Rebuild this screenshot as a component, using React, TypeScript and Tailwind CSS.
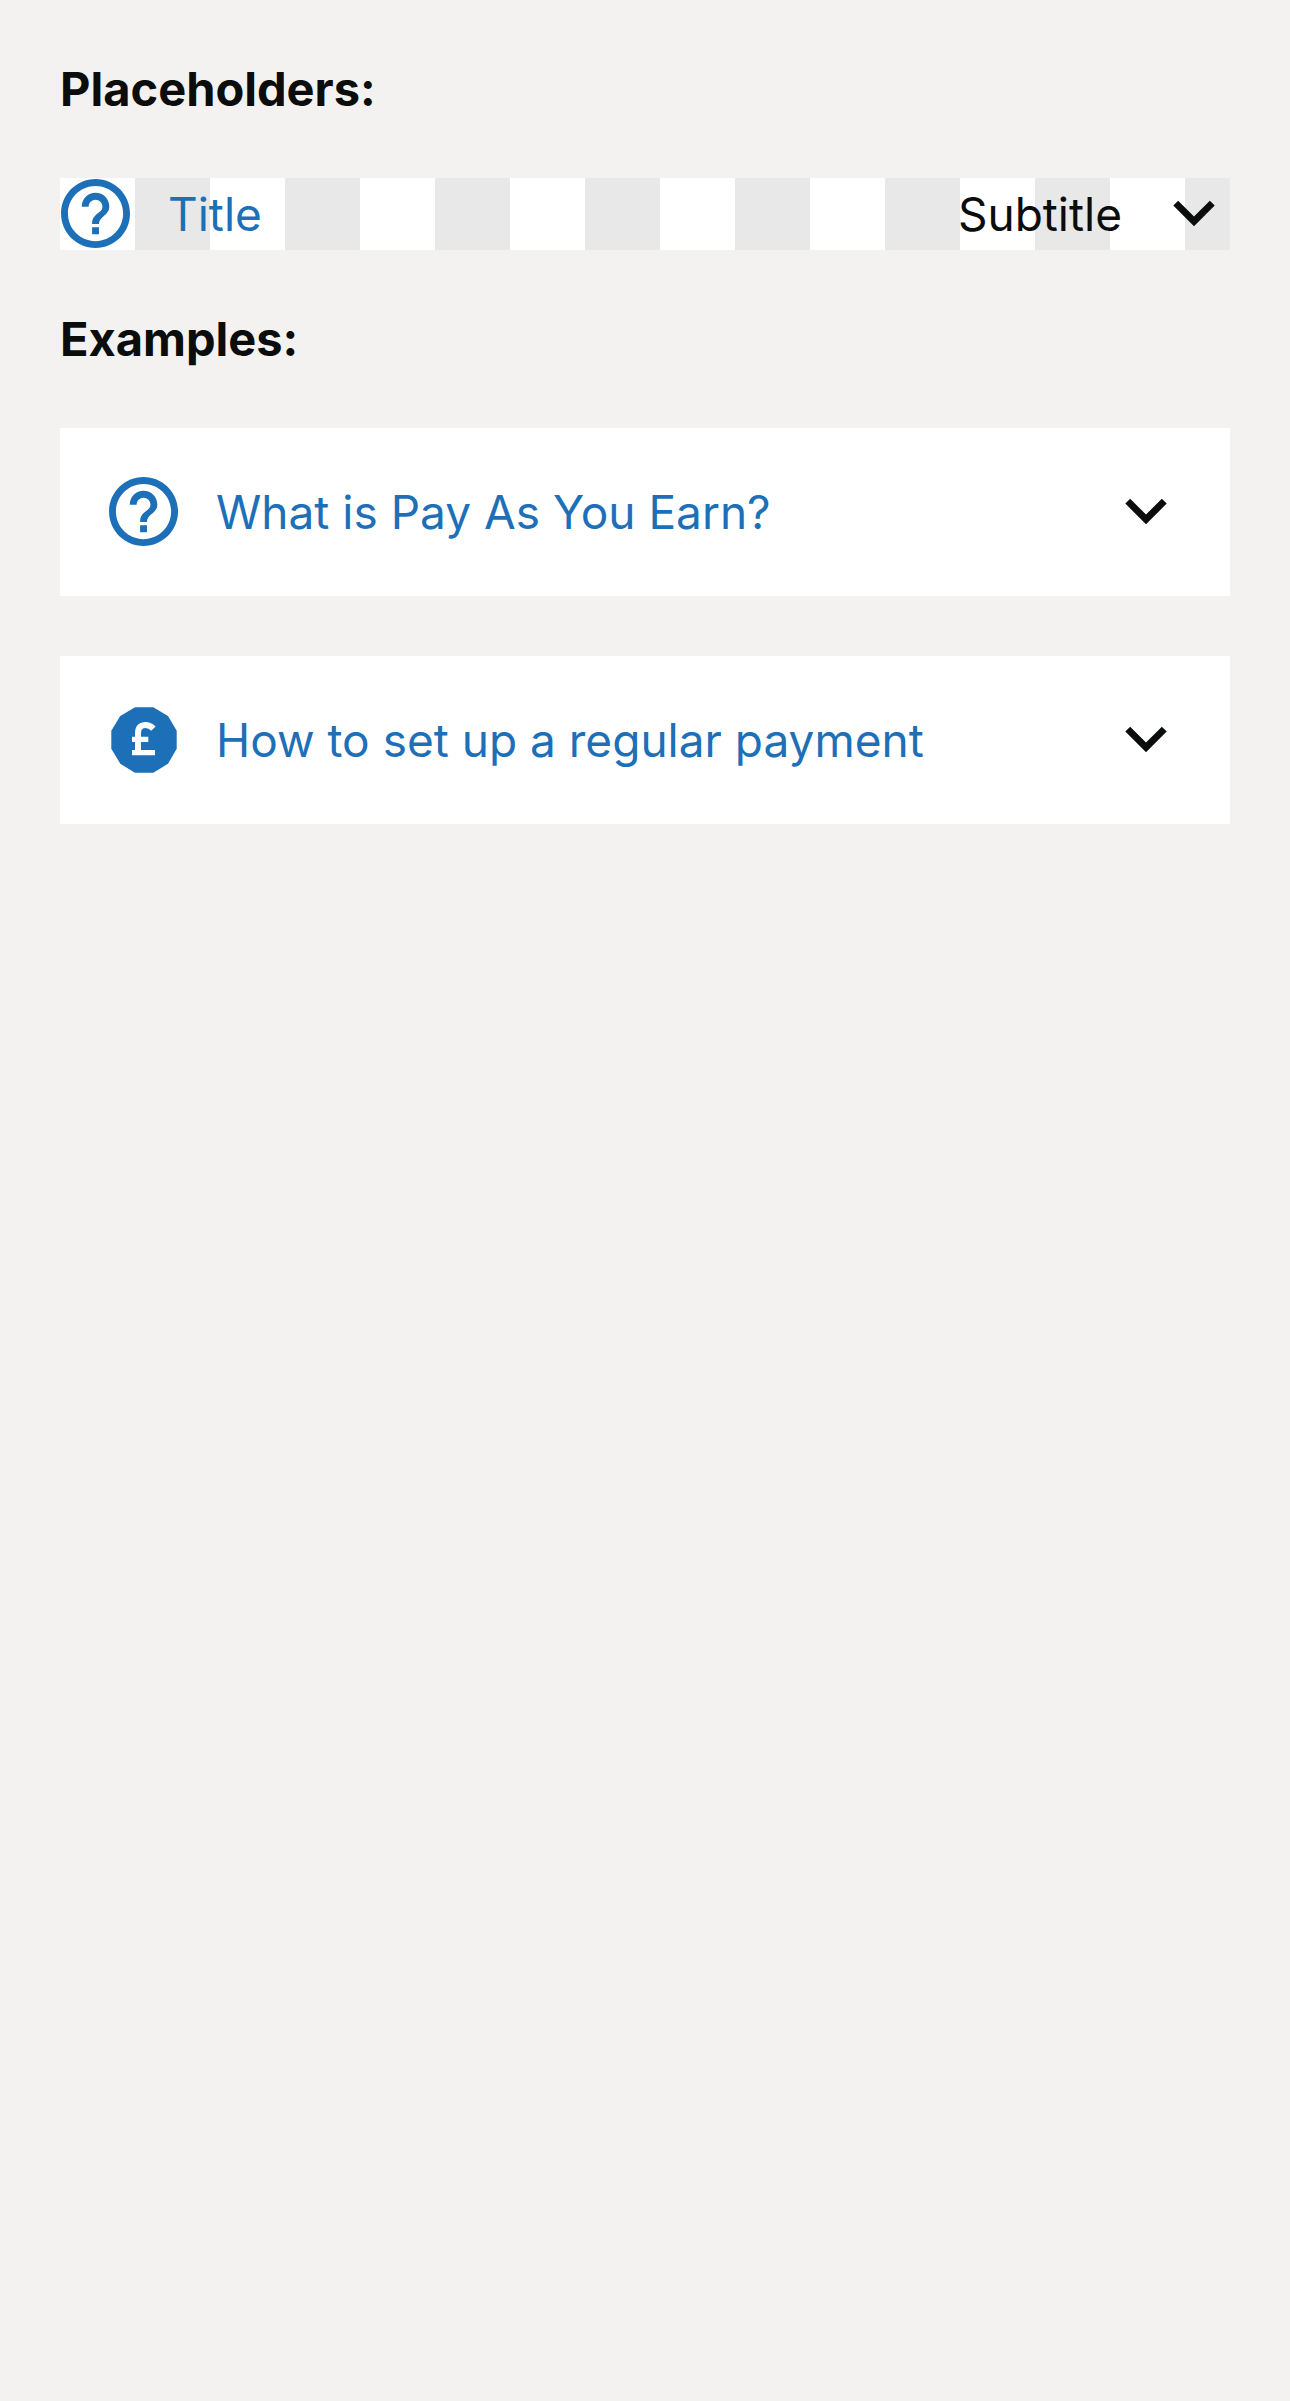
import { useState, type ReactNode } from "react";

function HelpIcon() {
  return (
    <svg aria-hidden="true" viewBox="1.7 1.7 20.87 20.87" className="size-[72px] shrink-0 fill-[#1d70b8]">
      <path d="M11 18h2v-2h-2v2zm1-16C6.48 2 2 6.48 2 12s4.480 10 10 10 10-4.480 10-10S17.520 2 12 2zm0 18c-4.410 0-8-3.590-8-8s3.590-8 8-8 8 3.590 8 8-3.590 8-8 8zm0-14c-2.210 0-4 1.790-4 4h2c0-1.100.900-2 2-2s2 .900 2 2c0 2-3 1.750-3 5h2c0-2.250 3-2.500 3-5 0-2.210-1.790-4-4-4z" />
    </svg>
  );
}

function CoinIcon() {
  return (
    <svg aria-hidden="true" viewBox="0 0 72 72" className="size-[72px] shrink-0">
      <polygon
        className="fill-[#1d70b8]"
        points="27,3.3 45.3,3.3 60,12 68.7,26.7 68.7,44.7 60,59.7 45.3,68.7 27,68.7 12.3,59.7 3.3,44.7 3.3,26.7 12.3,12"
      />
      <g className="fill-none stroke-white" strokeWidth="5.4">
        <path d="M30 48V29C30 23.500 33 21 37.500 21C40.800 21 43.200 22.200 45.400 24.600" strokeWidth="6" />
        <path d="M24 35.400H40.300M24 48.600H47" />
      </g>
    </svg>
  );
}

function ChevronIcon() {
  return (
    <svg aria-hidden="true" viewBox="1.565 2 20.87 20.87" className="size-[72px] shrink-0 fill-[#0b0c0c]">
      <path d="M16.590 8.590 12 13.170 7.410 8.590 6 10l6 6 6-6z" />
    </svg>
  );
}

function Heading({ children }: { children: ReactNode }) {
  return <h2 className="py-[60px] text-[47px] leading-[58px] font-bold">{children}</h2>;
}

type RowProps = { icon: ReactNode; title: string; subtitle?: string; className: string };

function AccordionRow({ icon, title, subtitle, className }: RowProps) {
  const [open, setOpen] = useState(false);
  return (
    <button
      type="button"
      aria-expanded={open}
      onClick={() => setOpen(!open)}
      className={`flex w-full items-center gap-9 text-left text-[46px] leading-[72px] ${className}`}
    >
      {icon}
      <span className="grow text-[#1d70b8]">{title}</span>
      {subtitle && <span>{subtitle}</span>}
      <ChevronIcon />
    </button>
  );
}

export default function App() {
  return (
    <main className="min-h-screen bg-[#f3f2f1] px-[60px] font-['Inter',sans-serif] text-[#0b0c0c]">
      <section>
        <Heading>Placeholders:</Heading>
        <AccordionRow
          icon={<HelpIcon />}
          title="Title"
          subtitle="Subtitle"
          className="bg-[repeating-linear-gradient(to_right,#ffffff_0px,#ffffff_75px,#e8e8e8_75px,#e8e8e8_150px)]"
        />
      </section>
      <section>
        <Heading>Examples:</Heading>
        <div className="flex flex-col gap-[60px]">
          <AccordionRow icon={<HelpIcon />} title="What is Pay As You Earn?" className="bg-white p-12" />
          <AccordionRow icon={<CoinIcon />} title="How to set up a regular payment" className="bg-white p-12" />
        </div>
      </section>
    </main>
  );
}
